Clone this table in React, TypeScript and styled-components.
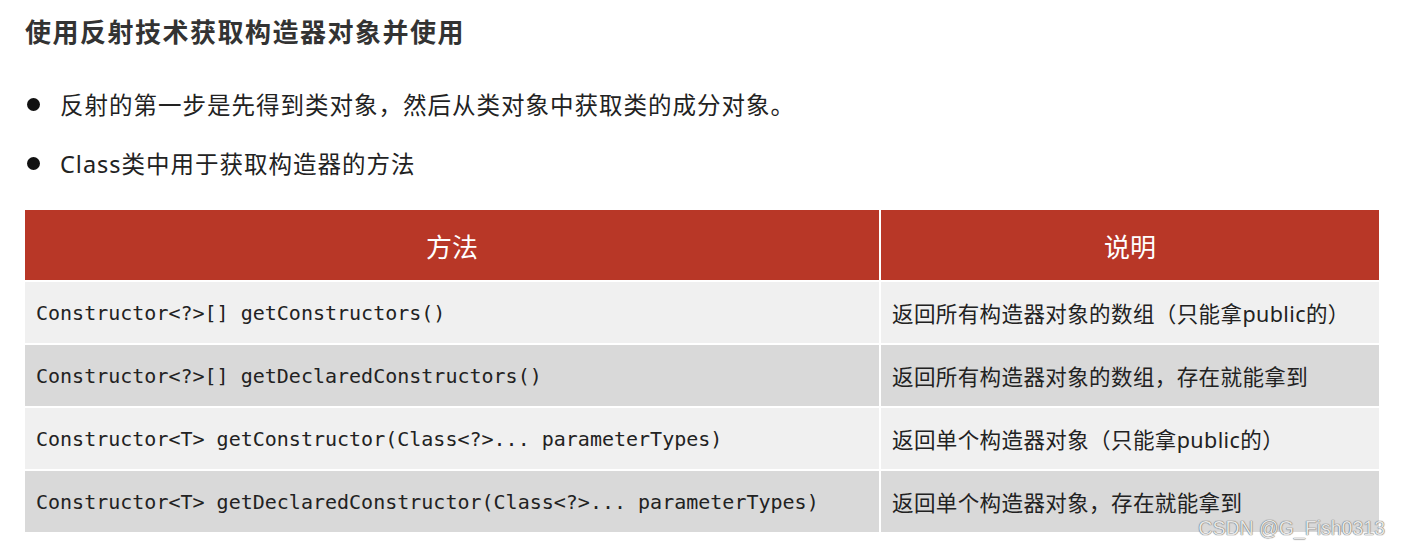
import styled, { createGlobalStyle } from "styled-components";

const GlobalStyle = createGlobalStyle`
    body {
        margin: 0;
        background: #fff;
        font-family: "Noto Sans", "Noto Sans CJK SC", sans-serif;
    }
`

const Page = styled.div`
    position: relative;
    width: 1401px;
    height: 547px;
    padding: 15px 22px 0 25px;
    box-sizing: border-box;
    overflow: hidden;
`

const Title = styled.h2`
    margin: 0;
    font-size: 26px;
    line-height: 32px;
    font-weight: 700;
    letter-spacing: 1.5px;
    color: #333;
    font-family: "Noto Sans CJK SC", sans-serif;
`

const Bullets = styled.ul`
    list-style: none;
    margin: 37px 0 0 0;
    padding: 0;
    display: flex;
    flex-direction: column;
    gap: 19px;
`

const Bullet = styled.li`
    display: flex;
    align-items: center;
    gap: 20px;
    height: 40px;
    font-size: 23.5px;
    letter-spacing: 1px;
    color: #222;
    &::before {
        content: "";
        width: 13px;
        height: 13px;
        margin-left: 2px;
        border-radius: 50%;
        background: #111;
        flex-shrink: 0;
    }
`

const Table = styled.div`
    display: grid;
    grid-template-columns: 854px 1fr;
    column-gap: 2px;
    row-gap: 2px;
    margin-top: 27px;
`

const HeadCell = styled.div`
    height: 70px;
    display: flex;
    align-items: center;
    justify-content: center;
    background: #b83727;
    color: #fff;
    font-size: 26px;
    font-family: "Noto Sans CJK SC", sans-serif;
`

const Cell = styled.div<{ $alt: boolean; $code?: boolean }>`
    height: 61px;
    display: flex;
    align-items: center;
    padding-left: 11px;
    background: ${p => (p.$alt ? "#d9d9d9" : "#f0f0f0")};
    color: #222;
    font-size: ${p => (p.$code ? "20px" : "21.5px")};
    font-family: ${p => (p.$code ? '"DejaVu Sans Mono", monospace' : '"Noto Sans", "Noto Sans CJK SC", sans-serif')};
    letter-spacing: ${p => (p.$code ? "0" : "0.4px")};
    white-space: pre;
`

const Watermark = styled.div`
    position: absolute;
    right: 16px;
    bottom: 7px;
    font-family: "Liberation Sans", sans-serif;
    font-size: 19.5px;
    color: #e6e6e6;
    text-shadow: 0 0 1px #555, 0 0 1px #777;
`

const rows = [
    ["Constructor<?>[] getConstructors()", "返回所有构造器对象的数组（只能拿public的）"],
    ["Constructor<?>[] getDeclaredConstructors()", "返回所有构造器对象的数组，存在就能拿到"],
    ["Constructor<T> getConstructor(Class<?>... parameterTypes)", "返回单个构造器对象（只能拿public的）"],
    ["Constructor<T> getDeclaredConstructor(Class<?>... parameterTypes)", "返回单个构造器对象，存在就能拿到"],
]

const App = () => {
    return (
        <Page>
            <GlobalStyle />
            <Title>使用反射技术获取构造器对象并使用</Title>
            <Bullets>
                <Bullet>反射的第一步是先得到类对象，然后从类对象中获取类的成分对象。</Bullet>
                <Bullet>Class类中用于获取构造器的方法</Bullet>
            </Bullets>
            <Table>
                <HeadCell>方法</HeadCell>
                <HeadCell>说明</HeadCell>
                {rows.map((row, i) => [
                    <Cell key={`m${i}`} $alt={i % 2 === 1} $code>{row[0]}</Cell>,
                    <Cell key={`d${i}`} $alt={i % 2 === 1}>{row[1]}</Cell>,
                ])}
            </Table>
            <Watermark>CSDN @G_Fish0313</Watermark>
        </Page>
    )
}

export default App
